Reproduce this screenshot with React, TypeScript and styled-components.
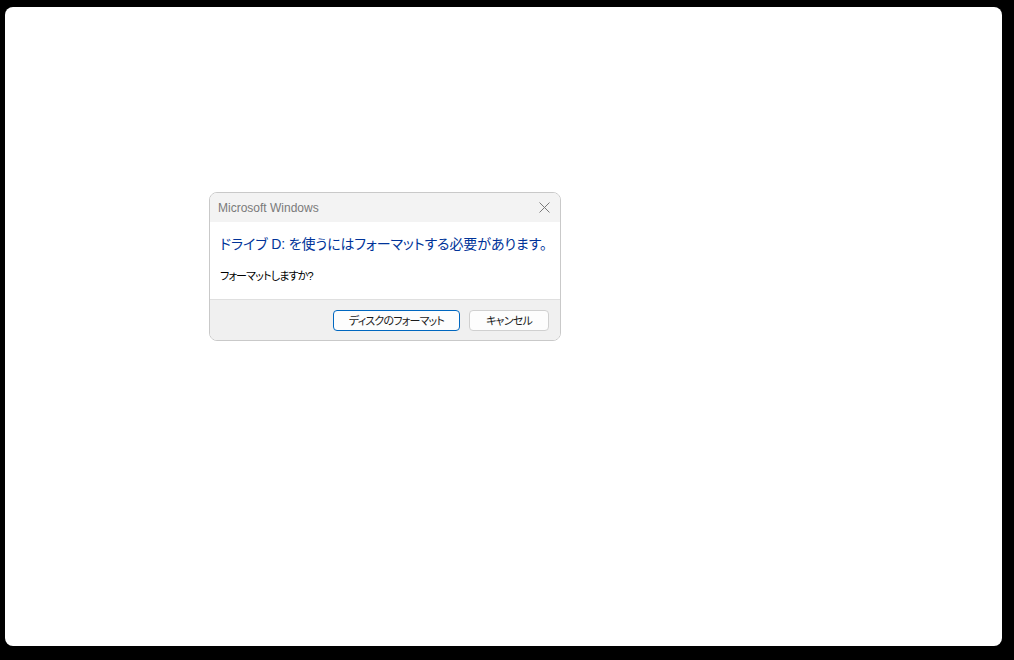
import React from 'react';
import styled, { createGlobalStyle } from 'styled-components';

const GlobalStyle = createGlobalStyle`
  html, body {
    margin: 0;
    padding: 0;
    background: #000;
  }
  #root {
    height: 660px;
  }
`;

const Screen = styled.div`
  box-sizing: border-box;
  height: 660px;
  padding: 7px 12px 14px 5px;
`;

const Window = styled.div`
  box-sizing: border-box;
  height: 100%;
  background: #fff;
  border-radius: 8px;
  padding: 185px 0 0 204px;
`;

const Dialog = styled.div`
  box-sizing: border-box;
  width: 352px;
  height: 149px;
  border: 1px solid #c9c9c9;
  border-radius: 8px;
  overflow: hidden;
  background: #fff;
  display: flex;
  flex-direction: column;
  font-family: "Liberation Sans", "Noto Sans CJK JP", sans-serif;
  font-feature-settings: "palt";
`;

const TitleBar = styled.div`
  height: 29px;
  background: #f3f3f3;
  display: flex;
  align-items: center;
  justify-content: space-between;
  padding: 0 9px 0 8px;
`;

const Title = styled.span`
  font-size: 12px;
  color: #7a7a7a;
`;

const CloseButton = styled.button`
  border: none;
  background: none;
  padding: 0;
  width: 14px;
  height: 14px;
  display: flex;
  align-items: center;
  justify-content: center;
  cursor: pointer;
`;

const Content = styled.div`
  flex: 1;
  padding: 11px 9px 0 10px;
  display: flex;
  flex-direction: column;
  gap: 13px;
`;

const Heading = styled.div`
  font-size: 14px;
  line-height: 22px;
  letter-spacing: -0.1px;
  color: #003399;
  white-space: nowrap;
`;

const Message = styled.div`
  font-size: 11px;
  line-height: 16px;
  letter-spacing: -0.8px;
  color: #000;
`;

const Footer = styled.div`
  height: 41px;
  box-sizing: border-box;
  background: #f0f0f0;
  border-top: 1px solid #dfdfdf;
  display: flex;
  align-items: center;
  justify-content: flex-end;
  gap: 9px;
  padding: 0 11px 0 0;
`;

const Button = styled.button<{ $primary?: boolean }>`
  box-sizing: border-box;
  height: 21px;
  padding: 0;
  border-radius: 4px;
  font-family: inherit;
  font-feature-settings: "palt";
  font-size: 11px;
  letter-spacing: -0.8px;
  color: #1b1b1b;
  background: #fdfdfd;
  border: 1px solid ${p => (p.$primary ? '#0067c0' : '#d0d0d0')};
  cursor: pointer;
`;

export default function App() {
  return (
    <>
      <GlobalStyle />
      <Screen>
        <Window>
          <Dialog>
            <TitleBar>
              <Title>Microsoft Windows</Title>
              <CloseButton aria-label="閉じる">
                <svg width="11" height="11" viewBox="0 0 11 11">
                  <path d="M0.5 0.5 L10.5 10.5 M10.5 0.5 L0.5 10.5" stroke="#7a7a7a" strokeWidth="1" fill="none" />
                </svg>
              </CloseButton>
            </TitleBar>
            <Content>
              <Heading>ドライブ D: を使うにはフォーマットする必要があります。</Heading>
              <Message>フォーマットしますか?</Message>
            </Content>
            <Footer>
              <Button $primary style={{ width: 127 }}>ディスクのフォーマット</Button>
              <Button style={{ width: 80 }}>キャンセル</Button>
            </Footer>
          </Dialog>
        </Window>
      </Screen>
    </>
  );
}
